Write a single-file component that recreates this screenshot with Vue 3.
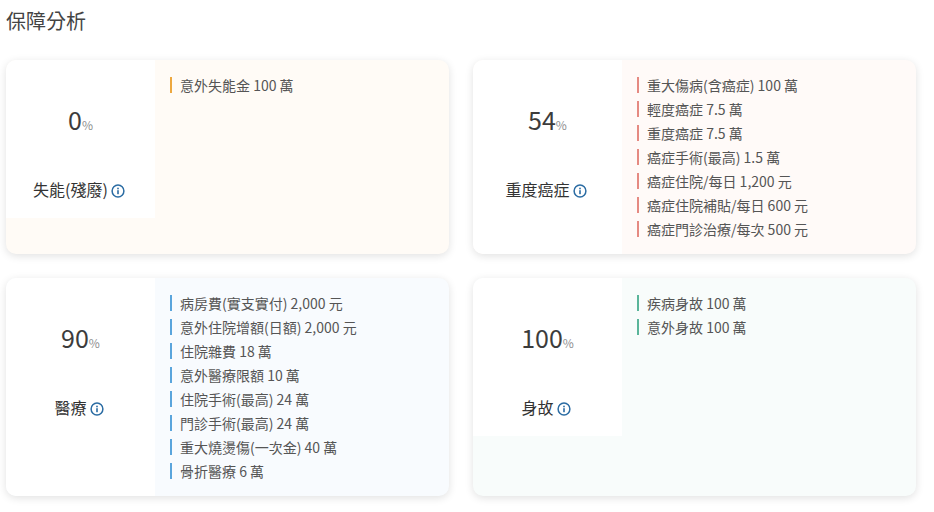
<script setup>
const cards = [
  { pct: 0, label: '失能(殘廢)', tone: 'amber', items: ['意外失能金 100 萬'] },
  { pct: 54, label: '重度癌症', tone: 'red', items: ['重大傷病(含癌症) 100 萬', '輕度癌症 7.5 萬', '重度癌症 7.5 萬', '癌症手術(最高) 1.5 萬', '癌症住院/每日 1,200 元', '癌症住院補貼/每日 600 元', '癌症門診治療/每次 500 元'] },
  { pct: 90, label: '醫療', tone: 'blue', items: ['病房費(實支實付) 2,000 元', '意外住院增額(日額) 2,000 元', '住院雜費 18 萬', '意外醫療限額 10 萬', '住院手術(最高) 24 萬', '門診手術(最高) 24 萬', '重大燒燙傷(一次金) 40 萬', '骨折醫療 6 萬'] },
  { pct: 100, label: '身故', tone: 'green', items: ['疾病身故 100 萬', '意外身故 100 萬'] },
]
</script>

<template>
  <main class="page">
    <h1 class="title">保障分析</h1>
    <section class="grid">
      <article v-for="card in cards" :key="card.label" class="card" :class="card.tone">
        <div class="row">
          <div class="summary">
            <div class="score"><span class="num">{{ card.pct }}</span><span class="unit">%</span></div>
            <div class="label">
              <span>{{ card.label }}</span>
              <svg class="info" viewBox="0 0 14 14" width="14" height="14" aria-hidden="true">
                <circle cx="7" cy="7" r="5.9" fill="none" stroke="#2b6ca3" stroke-width="1.5" />
                <rect x="6.2" y="6.2" width="1.6" height="4" fill="#2b6ca3" />
                <rect x="6.2" y="3.7" width="1.6" height="1.6" fill="#2b6ca3" />
              </svg>
            </div>
          </div>
          <ul class="list">
            <li v-for="item in card.items" :key="item" class="item"><span class="text">{{ item }}</span></li>
          </ul>
        </div>
      </article>
    </section>
  </main>
</template>

<style scoped>
.page {
  width: 934px;
  height: 512px;
  box-sizing: border-box;
  padding: 7px 18px 0 6px;
  font-family: "Noto Sans CJK TC", "Noto Sans", sans-serif;
  color: #444;
  overflow: hidden;
}
.title {
  margin: 0 0 25px;
  height: 28px;
  font-size: 20px;
  line-height: 28px;
  font-weight: 400;
  color: #444;
}
.grid {
  display: grid;
  grid-template-columns: 443px 443px;
  column-gap: 24px;
  row-gap: 24px;
}
.card {
  border-radius: 10px;
  box-shadow: 0 2px 8px rgba(0, 0, 0, 0.12);
  overflow: hidden;
}
.amber { background: #fffbf6; --bar: #eda83f; }
.red { background: #fffaf8; --bar: #e58a82; }
.blue { background: #f8fbfe; --bar: #5aa5dc; }
.green { background: #f8fcfb; --bar: #5ab59a; }
.row {
  display: flex;
}
.summary {
  flex: 0 0 149px;
  min-height: 158px;
  background: #fff;
  box-sizing: border-box;
  padding-top: 42px;
  text-align: center;
}
.score {
  height: 34px;
  line-height: 34px;
  white-space: nowrap;
}
.num {
  font-size: 25px;
  font-weight: 400;
  color: #3c3c3c;
}
.unit {
  font-size: 12px;
  color: #8f8f8f;
}
.label {
  margin-top: 41px;
  height: 24px;
  display: flex;
  align-items: center;
  justify-content: center;
  gap: 3px;
  font-size: 16px;
  font-weight: 400;
  color: #333;
}
.info {
  margin-top: 4px;
  margin-right: 3px;
  flex: none;
}
.list {
  list-style: none;
  margin: 0;
  padding: 13px 15px 13px;
  flex: 1;
}
.item {
  height: 24px;
  display: flex;
  align-items: center;
  font-size: 14px;
  color: #555;
}
.text {
  border-left: 2px solid var(--bar);
  padding-left: 8px;
  height: 16px;
  line-height: 16px;
  white-space: nowrap;
}
</style>
